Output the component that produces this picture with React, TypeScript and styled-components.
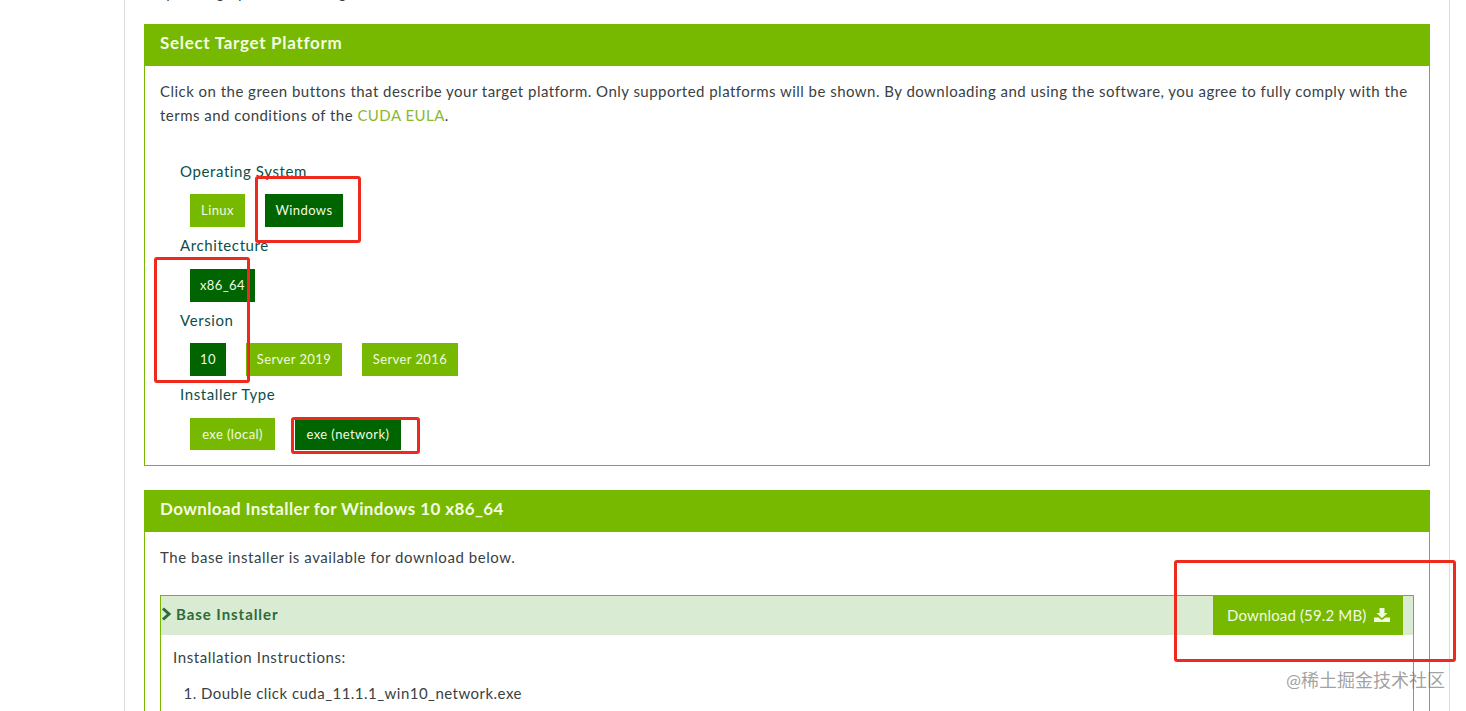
import React from "react"
import styled, { createGlobalStyle } from "styled-components"

const green = "#76b900"
const darkGreen = "#006400"
const labelColor = "#0b4f4a"
const textColor = "#3a3f42"

const GlobalStyle = createGlobalStyle`
    html, body {
        margin: 0;
        padding: 0;
        background: #fff;
        overflow: hidden;
    }
    body {
        font-family: "Lato", "Noto Sans CJK SC", sans-serif;
    }
`

const Page = styled.div`
    position: relative;
    width: 1466px;
    height: 711px;
    overflow: hidden;
`

const Column = styled.div`
    display: flow-root;
    box-sizing: border-box;
    width: 1326px;
    height: 711px;
    margin-left: 124px;
    padding: 0 19px;
    border-left: 1px solid #dcdcdc;
    border-right: 1px solid #dcdcdc;
`

const ClippedIntro = styled.p`
    margin: -20px 0 0;
    height: 44px;
    padding-left: 10px;
    line-height: 24px;
    font-size: 15px;
    letter-spacing: 0.5px;
    color: ${textColor};
`

const Panel = styled.section`
    box-sizing: border-box;
    border: 1px solid ${green};
    margin-bottom: 24px;
`

const PanelHeader = styled.h2<{ $tracking: number }>`
    margin: -1px -1px 0;
    height: 42px;
    padding-left: 16px;
    background: ${green};
    color: #f4fbe4;
    font-size: 17px;
    font-weight: 700;
    letter-spacing: ${(p) => p.$tracking}px;
    line-height: 38px;
`

const BodyText = styled.p<{ $tracking: number }>`
    margin: 0;
    padding: 13px 15px 0;
    font-size: 15px;
    line-height: 24px;
    letter-spacing: ${(p) => p.$tracking}px;
    color: ${textColor};
`

const EulaLink = styled.a`
    color: #8ab82e;
`

const Selector = styled.div`
    padding: 32px 0 15px 35px;
`

const SelectorLabel = styled.div`
    font-size: 15px;
    line-height: 24px;
    letter-spacing: 0.6px;
    color: ${labelColor};
`

const OptionRow = styled.div<{ $top: number; $bottom?: number }>`
    display: flex;
    gap: 20px;
    padding: ${(p) => p.$top}px 0 ${(p) => p.$bottom ?? 6}px 10px;
`

const Option = styled.div<{ $active?: boolean; $w: number; $h?: number }>`
    width: ${(p) => p.$w}px;
    height: ${(p) => p.$h ?? 33}px;
    background: ${(p) => (p.$active ? darkGreen : green)};
    color: #f2fae0;
    font-size: 13px;
    letter-spacing: 0.4px;
    line-height: ${(p) => p.$h ?? 33}px;
    text-align: center;
    white-space: nowrap;
`

const Accordion = styled.div`
    margin: 26px 15px 0;
    height: 140px;
    border: 1px solid ${green};
    border-bottom: none;
`

const AccordionHead = styled.div`
    display: flex;
    align-items: center;
    justify-content: space-between;
    height: 39px;
    padding-right: 10px;
    background: #d9ebd3;
`

const AccordionTitle = styled.div`
    display: flex;
    align-items: center;
    gap: 4px;
    padding-bottom: 3px;
    color: #2f6b3a;
    font-size: 15px;
    font-weight: 700;
    letter-spacing: 0.95px;
`

const DownloadButton = styled.div`
    display: flex;
    align-items: center;
    gap: 8px;
    width: 190px;
    height: 40px;
    margin-top: -1px;
    box-sizing: border-box;
    padding-left: 14px;
    background: ${green};
    color: #f2fae0;
    font-size: 15px;
    letter-spacing: 0.15px;
`

const Instructions = styled.div`
    padding: 10px 12px;
    font-size: 15px;
    line-height: 24px;
    letter-spacing: 0.6px;
    color: ${textColor};
`

const StepList = styled.ol`
    margin: 12px 0 0;
    padding-left: 28px;
    letter-spacing: 0.47px;
`

const Annotation = styled.div<{ $x: number; $y: number; $w: number; $h: number }>`
    position: absolute;
    box-sizing: border-box;
    left: ${(p) => p.$x}px;
    top: ${(p) => p.$y}px;
    width: ${(p) => p.$w}px;
    height: ${(p) => p.$h}px;
    border: 3px solid #ee2a1f;
    border-radius: 3px;
`

const Watermark = styled.div`
    position: absolute;
    left: 1286px;
    top: 668px;
    font-size: 18px;
    line-height: 24px;
    color: rgba(120, 120, 120, 0.7);
    white-space: nowrap;
`

const Chevron = () => (
    <svg width="11" height="14" viewBox="0 0 11 14">
        <path d="M2 1.500 L8 7 L2 12.500" fill="none" stroke="#2f6b3a" strokeWidth="3" />
    </svg>
)

const DownloadIcon = () => (
    <svg width="16" height="14" viewBox="0 0 16 14">
        <path d="M5.500 0h5v5h3L8 10.200 2.500 5h3z M0 9.500h4.500L8 12l3.500-2.500H16V14H0z" fill="#f2fae0" />
    </svg>
)

export default function App() {
    return (
        <Page>
            <GlobalStyle />
            <Column>
                <ClippedIntro>Operating System, and Target Hardware</ClippedIntro>
                <Panel>
                    <PanelHeader $tracking={0.7}>Select Target Platform</PanelHeader>
                    <BodyText $tracking={0.47}>
                        Click on the green buttons that describe your target platform. Only supported platforms will be shown. By downloading and using the software, you agree to fully comply with the terms and conditions of the <EulaLink>CUDA EULA</EulaLink>.
                    </BodyText>
                    <Selector>
                        <SelectorLabel>Operating System</SelectorLabel>
                        <OptionRow $top={11}>
                            <Option $w={55}>Linux</Option>
                            <Option $active $w={78}>Windows</Option>
                        </OptionRow>
                        <SelectorLabel>Architecture</SelectorLabel>
                        <OptionRow $top={12}>
                            <Option $active $w={65}>x86_64</Option>
                        </OptionRow>
                        <SelectorLabel>Version</SelectorLabel>
                        <OptionRow $top={11}>
                            <Option $active $w={36}>10</Option>
                            <Option $w={96}>Server 2019</Option>
                            <Option $w={96}>Server 2016</Option>
                        </OptionRow>
                        <SelectorLabel>Installer Type</SelectorLabel>
                        <OptionRow $top={12} $bottom={0}>
                            <Option $w={85} $h={32}>exe (local)</Option>
                            <Option $active $w={106} $h={32}>exe (network)</Option>
                        </OptionRow>
                    </Selector>
                </Panel>
                <Panel>
                    <PanelHeader $tracking={0.38}>Download Installer for Windows 10 x86_64</PanelHeader>
                    <BodyText $tracking={0.55}>The base installer is available for download below.</BodyText>
                    <Accordion>
                        <AccordionHead>
                            <AccordionTitle><Chevron />Base Installer</AccordionTitle>
                            <DownloadButton>Download (59.2 MB) <DownloadIcon /></DownloadButton>
                        </AccordionHead>
                        <Instructions>
                            Installation Instructions:
                            <StepList>
                                <li>Double click cuda_11.1.1_win10_network.exe</li>
                            </StepList>
                        </Instructions>
                    </Accordion>
                </Panel>
            </Column>
            <Annotation $x={255} $y={176} $w={106} $h={67} />
            <Annotation $x={154} $y={257} $w={96} $h={126} />
            <Annotation $x={291} $y={417} $w={129} $h={37} />
            <Annotation $x={1174} $y={560} $w={282} $h={102} />
            <Watermark>@稀土掘金技术社区</Watermark>
        </Page>
    )
}
